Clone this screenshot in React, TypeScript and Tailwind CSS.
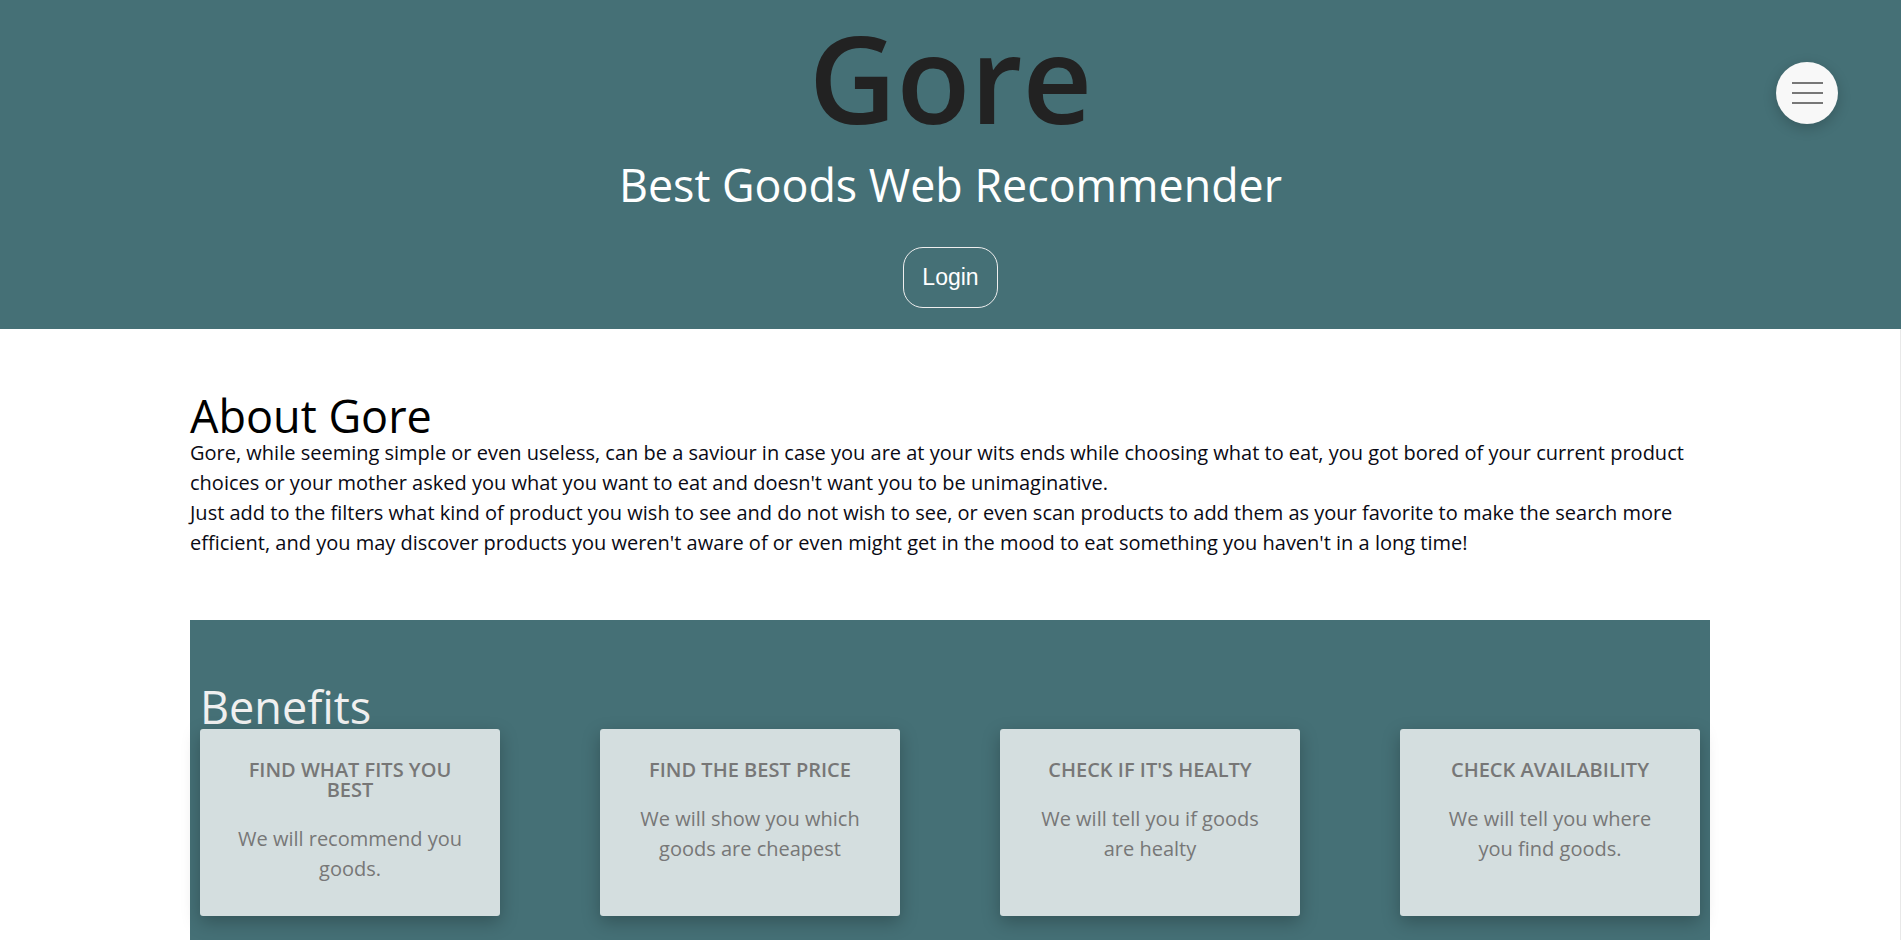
import React from 'react';

interface Benefit {
  title: string;
  text: string;
}

const benefits: Benefit[] = [
  { title: 'Find what fits you best', text: 'We will recommend you goods.' },
  { title: 'Find the best price', text: 'We will show you which goods are cheapest' },
  { title: "Check if it's healty", text: 'We will tell you if goods are healty' },
  { title: 'Check availability', text: 'We will tell you where you find goods.' },
];

const BenefitCard: React.FC<{ benefit: Benefit }> = ({ benefit }) => {
  return (
    <div className="w-[300px] rounded-[3px] bg-[#d4dedf] px-[30px] pt-[31px] pb-[32px] text-center text-[#777] shadow-[0_6px_18px_rgba(0,0,0,0.25)]">
      <h3 className="text-[20px] leading-[20px] font-semibold uppercase">{benefit.title}</h3>
      <p className="mt-[24px] text-[20px] leading-[30px]">{benefit.text}</p>
    </div>
  );
};

const App: React.FC = () => {
  return (
    <div className="min-h-[940px] bg-white font-['Open_Sans',sans-serif]">
      <header className="relative flex flex-col items-center bg-[#457076] pt-[5px] pb-[21px]">
        <h1 className="text-[121px] leading-[1.2] font-semibold text-[#222]">Gore</h1>
        <h2 className="mt-[13px] text-[2.8rem] leading-none text-white">Best Goods Web Recommender</h2>
        <button className="mt-[39px] h-[61px] w-[95px] rounded-[20px] border border-[#eee] font-['Liberation_Sans',Arial,sans-serif] text-[23px] text-white">
          Login
        </button>
        <button className="absolute top-[62px] right-[63px] flex h-[62px] w-[62px] flex-col items-center justify-center gap-[8px] rounded-full bg-[#f8f8f8] shadow-[0_4px_14px_rgba(0,0,0,0.2)]">
          <span className="h-[2px] w-[31px] bg-[#777]" />
          <span className="h-[2px] w-[31px] bg-[#777]" />
          <span className="h-[2px] w-[31px] bg-[#777]" />
        </button>
      </header>

      <main className="border-r border-[#e8e8e8] pb-10">
        <div className="mx-auto w-[80%]">
          <section className="pt-[64px]">
            <h2 className="text-[45px] leading-none text-black">About Gore</h2>
            <p className="text-[20px] leading-[30px] text-[#0a0a14]">
              Gore, while seeming simple or even useless, can be a saviour in case you are at your wits ends while choosing what to eat, you got bored of your current product choices or your mother asked you what you want to eat and doesn't want you to be unimaginative.
              <br />
              Just add to the filters what kind of product you wish to see and do not wish to see, or even scan products to add them as your favorite to make the search more efficient, and you may discover products you weren't aware of or even might get in the mood to eat something you haven't in a long time!
            </p>
          </section>

          <section className="mt-[62px] bg-[#457076] px-[10px] pt-[64px] pb-[40px]">
            <h2 className="text-[45px] leading-none text-[#f0f0f0]">Benefits</h2>
            <div className="flex items-stretch justify-between">
              {benefits.map((b) => (
                <BenefitCard key={b.title} benefit={b} />
              ))}
            </div>
          </section>
        </div>
      </main>
    </div>
  );
};

export default App;
